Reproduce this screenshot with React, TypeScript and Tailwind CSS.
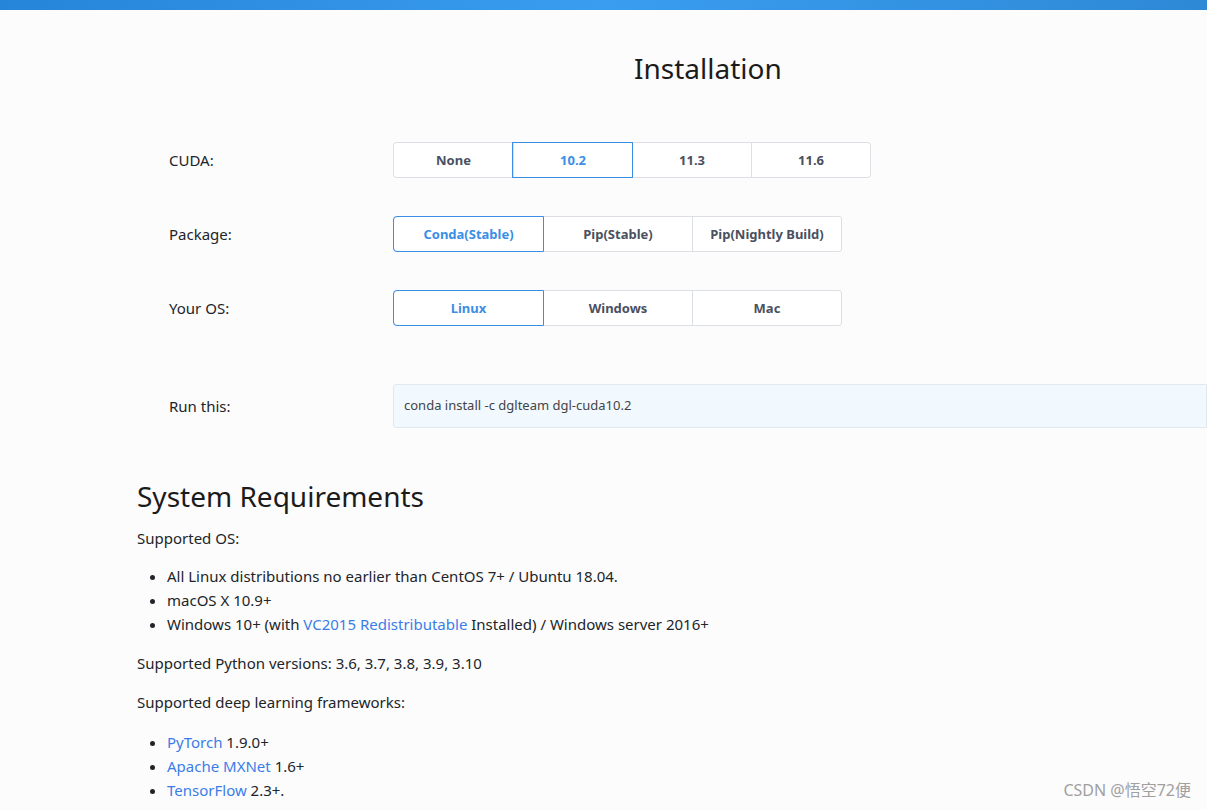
import React, { useState } from "react";

const FONT = { fontFamily: '"Noto Sans", "Open Sans", "Liberation Sans", "Noto Sans CJK SC", sans-serif' };

const cudaOpts = ["None", "10.2", "11.3", "11.6"];
const pkgOpts = ["Conda(Stable)", "Pip(Stable)", "Pip(Nightly Build)"];
const osOpts = ["Linux", "Windows", "Mac"];

function OptionRow({
  label,
  options,
  value,
  onPick,
  width,
}: {
  label: string;
  options: string[];
  value: string;
  onPick: (v: string) => void;
  width: string;
}) {
  return (
    <div className="flex items-center h-[36px]">
      <div className="w-[224px] text-[15px] text-[#212529]">{label}</div>
      <div className="flex rounded-[3px] border border-[#dcdfe3] bg-white">
        {options.map((o, i) => {
          const on = o === value;
          return (
            <button
              key={o}
              type="button"
              onClick={() => onPick(o)}
              className={`${width} h-[34px] pt-[1px] text-[13px] font-bold ${
                on ? "text-[#3a8ee6] outline outline-1 outline-[#3a8ee6] relative z-10" : "text-[#4b5060]"
              } ${i > 0 ? "border-l border-[#dcdfe3]" : ""} ${i === 0 ? "rounded-l-[3px]" : ""}`}
            >
              {o}
            </button>
          );
        })}
      </div>
    </div>
  );
}

export default function App() {
  const [cuda, setCuda] = useState("10.2");
  const [pkg, setPkg] = useState("Conda(Stable)");
  const [os, setOs] = useState("Linux");

  const cmd = `conda install -c dglteam dgl-cuda${cuda}`;

  return (
    <div className="min-h-[810px] bg-[#fcfcfc] overflow-hidden relative" style={FONT}>
      {/* top blue bar */}
      <div className="h-[10px] bg-gradient-to-r from-[#2585d8] via-[#3a9df0] to-[#2d89d6]" />

      <div className="pl-[137px]">
        <h1 className="text-[28px] text-[#1b1b1b] ml-[497px] mt-[40px] leading-[36px]">Installation</h1>

        <div className="pl-[32px] mt-[56px] flex flex-col gap-[38px]">
          <OptionRow label="CUDA:" options={cudaOpts} value={cuda} onPick={setCuda} width="w-[119px]" />
          <OptionRow label="Package:" options={pkgOpts} value={pkg} onPick={setPkg} width="w-[149px]" />
          <OptionRow label="Your OS:" options={osOpts} value={os} onPick={setOs} width="w-[149px]" />
        </div>

        <div className="pl-[32px] mt-[58px] flex items-center">
          <div className="w-[224px] text-[15px] text-[#212529]">Run this:</div>
          <div className="flex-1 h-[44px] flex items-center bg-[#f1f8fe] border border-[#e2e8ee] rounded-l-[3px] pl-[10px] text-[13px] text-[#444] whitespace-nowrap">
            {cmd}
          </div>
        </div>

        <h2 className="text-[28px] text-[#1b1b1b] mt-[50px] leading-[36px]">System Requirements</h2>
        <div className="text-[15px] text-[#212529] leading-[24px]">
          <p className="mt-[12px]">Supported OS:</p>
          <ul className="list-disc pl-[30px] mt-[14px]">
            <li>All Linux distributions no earlier than CentOS 7+ / Ubuntu 18.04.</li>
            <li>macOS X 10.9+</li>
            <li>
              Windows 10+ (with <a className="text-[#3b7de8]">VC2015 Redistributable</a> Installed) / Windows server 2016+
            </li>
          </ul>
          <p className="mt-[15px]">Supported Python versions: 3.6, 3.7, 3.8, 3.9, 3.10</p>
          <p className="mt-[15px]">Supported deep learning frameworks:</p>
          <ul className="list-disc pl-[30px] mt-[16px]">
            <li>
              <a className="text-[#3b7de8]">PyTorch</a> 1.9.0+
            </li>
            <li>
              <a className="text-[#3b7de8]">Apache MXNet</a> 1.6+
            </li>
            <li>
              <a className="text-[#3b7de8]">TensorFlow</a> 2.3+.
            </li>
          </ul>
        </div>
      </div>

      <div className="absolute right-[16px] bottom-[8px] text-[16px] text-[#a0a0a0]">CSDN @悟空72便</div>
    </div>
  );
}
